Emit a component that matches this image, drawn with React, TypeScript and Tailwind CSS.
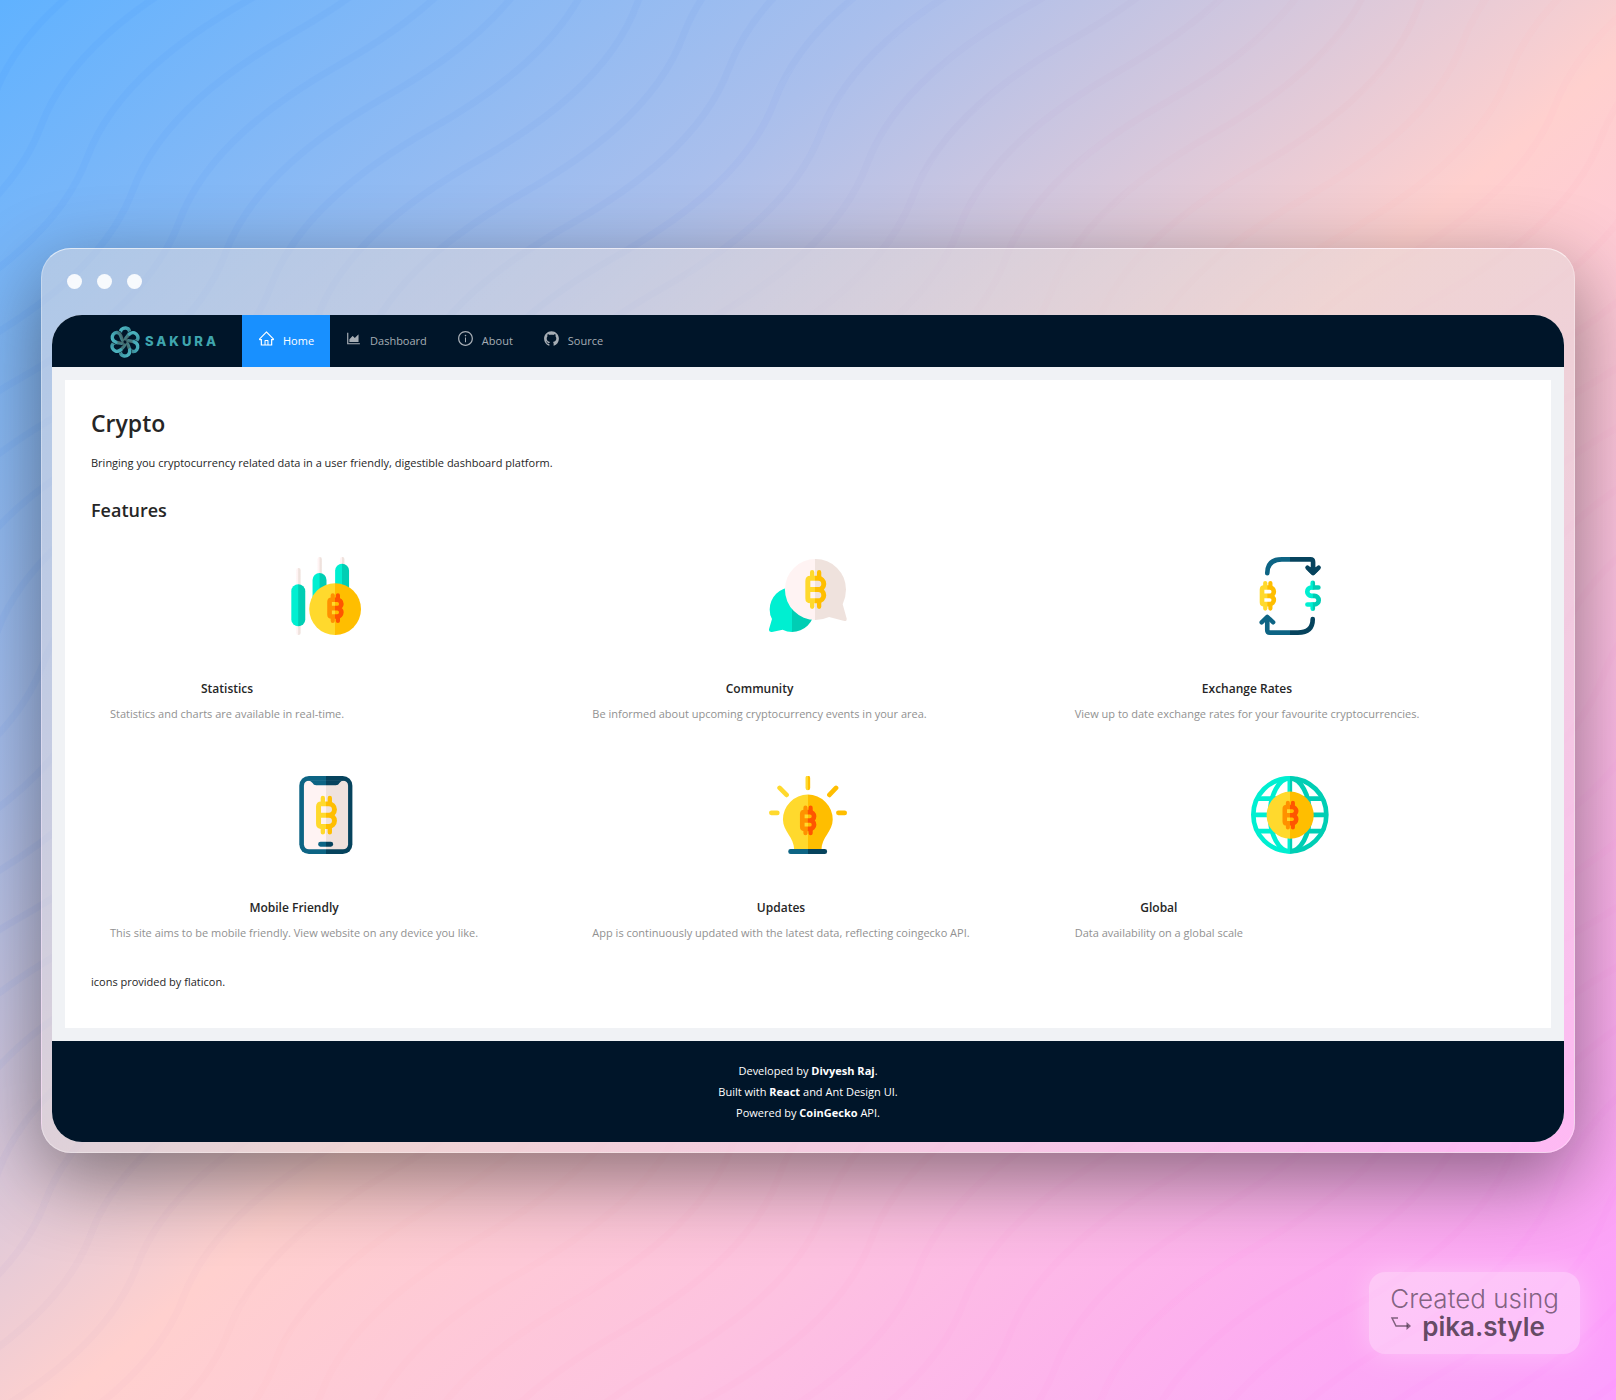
import type { ReactNode } from "react";
import {
  AiOutlineHome,
  AiOutlineAreaChart,
  AiOutlineInfoCircle,
  AiFillGithub,
} from "react-icons/ai";

/* ---------- Backdrop ---------- */

const halfWaves =
  "c-65 37 -134 87 -160 157 c-26 70 -95 120 -160 157 ";
const waveLine = "M1280 -1256 " + halfWaves.repeat(9);
const waveIndexes = Array.from({ length: 96 }, (_, i) => i - 42);

function Backdrop() {
  return (
    <svg
      className="absolute inset-0 h-full w-full"
      viewBox="0 0 1616 1400"
      preserveAspectRatio="xMidYMid slice"
      aria-hidden="true"
    >
      <defs>
        <linearGradient id="wave" gradientUnits="userSpaceOnUse" x1="0" y1="0" x2="1616" y2="1400">
          <stop offset="0" stopColor="#2f86ff" />
          <stop offset="0.3" stopColor="#6f92ea" />
          <stop offset="0.52" stopColor="#ffa0a8" stopOpacity="0.6" />
          <stop offset="1" stopColor="#ff6cff" stopOpacity="0.7" />
        </linearGradient>
        <mask id="waveMask">
          <g fill="none" stroke="#fff" strokeWidth="7">
            {waveIndexes.map((k) => (
              <path key={k} d={waveLine} transform={`translate(${385 + k * 46} ${97 + k * 32})`} />
            ))}
          </g>
        </mask>
      </defs>
      <rect width="1616" height="1400" fill="url(#wave)" opacity="0.08" mask="url(#waveMask)" />
    </svg>
  );
}

/* ---------- Logo ---------- */

function KnotLogo() {
  return (
    <svg className="h-8 w-8" viewBox="0 0 32 32" fill="none" aria-hidden="true">
      <defs>
        <linearGradient id="petal" x1="0" y1="0" x2="1" y2="1">
          <stop offset="0" stopColor="#4fb9c4" />
          <stop offset="0.5" stopColor="#3d9aa8" />
          <stop offset="1" stopColor="#4b5550" />
        </linearGradient>
      </defs>
      {[0, 60, 120, 180, 240, 300].map((a) => (
        <g key={a} transform={`rotate(${a} 16 16)`}>
          <path
            d="M11.4 8.2 C10.6 3.6 14 1.8 16.8 2 C20.6 2.4 21.6 6.2 19.6 8.8 C18.4 10.4 17 11.4 16.4 13"
            stroke="#001529"
            strokeWidth="4.4"
          />
          <path
            d="M11.4 8.2 C10.6 3.6 14 1.8 16.8 2 C20.6 2.4 21.6 6.2 19.6 8.8 C18.4 10.4 17 11.4 16.4 13"
            stroke="url(#petal)"
            strokeWidth="3.4"
            strokeLinecap="round"
          />
        </g>
      ))}
    </svg>
  );
}

/* ---------- Two-tone feature icons ---------- */

function Split({ id, x, a, b }: { id: string; x: number; a: string; b: string }) {
  return (
    <linearGradient id={id} gradientUnits="userSpaceOnUse" x1={x - 1} x2={x + 1} y1="0" y2="0">
      <stop offset="0" stopColor={a} />
      <stop offset="1" stopColor={b} />
    </linearGradient>
  );
}

function Coin({
  id,
  x,
  y,
  scale = 1,
  weight = 15,
  a,
  b,
}: {
  id: string;
  x: number;
  y: number;
  scale?: number;
  weight?: number;
  a: string;
  b: string;
}) {
  return (
    <g transform={`translate(${x} ${y}) scale(${scale})`}>
      <defs>
        <Split id={id} x={-2} a={a} b={b} />
      </defs>
      <g fill="none" stroke={`url(#${id})`} strokeWidth={weight} strokeLinecap="round" strokeLinejoin="round">
        <path d="M-16 -34 H7 a17 17 0 0 1 0 34 H-20 M7 0 a17 17 0 0 1 0 34 H-16 Q-24 34 -24 26 V-26 Q-24 -34 -16 -34" />
        <path d="M-11 -52 V-40 M10 -52 V-40 M-11 40 V52 M10 40 V52" strokeWidth={weight - 2} />
      </g>
    </g>
  );
}

const GREEN = { a: "#00efd1", b: "#00ceb4" };
const YELLOW = { a: "#ffd92d", b: "#ffbe00" };
const ORANGE = { a: "#ff9100", b: "#ff5500" };
const NAVY = { a: "#0d6484", b: "#06435d" };
const CREAM = { a: "#fff3f3", b: "#efe2dd" };

function StatisticsIcon() {
  return (
    <svg className="size-[78px]" viewBox="50 47 235 235" aria-hidden="true">
      <defs>
        <Split id="s1" x={84} {...GREEN} />
        <Split id="s2" x={148} {...GREEN} />
        <Split id="s3" x={216} {...GREEN} />
        <Split id="s4" x={84} {...CREAM} />
        <Split id="s5" x={148} {...CREAM} />
        <Split id="s6" x={216} {...CREAM} />
        <Split id="s7" x={195} {...YELLOW} />
      </defs>
      <rect x="78" y="80" width="13" height="202" rx="6" fill="url(#s4)" />
      <rect x="142" y="47" width="13" height="80" rx="6" fill="url(#s5)" />
      <rect x="210" y="47" width="13" height="60" rx="6" fill="url(#s6)" />
      <rect x="63" y="129" width="42" height="127" rx="21" fill="url(#s1)" />
      <rect x="127" y="95" width="42" height="110" rx="21" fill="url(#s2)" />
      <rect x="195" y="67" width="42" height="110" rx="21" fill="url(#s3)" />
      <circle cx="195" cy="204" r="78" fill="url(#s7)" />
      <Coin id="s8" x={196} y={201} scale={0.74} weight={19} {...ORANGE} />
    </svg>
  );
}

function CommunityIcon() {
  return (
    <svg className="size-[78px]" viewBox="57 47 235 235" aria-hidden="true">
      <defs>
        <Split id="c1" x={126} {...GREEN} />
        <Split id="c2" x={196} {...CREAM} />
      </defs>
      <path
        d="M126 138 a67 67 0 1 1 0 135 Q112 273 98 266 L66 273 Q56 274 57 265 L66 234 Q59 222 59 205 a67 67 0 0 1 67 -67Z"
        fill="url(#c1)"
      />
      <path
        d="M197 53 a92 92 0 0 1 92 92 Q289 168 279 189 L291 232 Q292 241 284 240 L238 228 Q218 237 197 237 a92 92 0 0 1 0 -184Z"
        fill="url(#c2)"
      />
      <Coin id="c3" x={198} y={145} {...YELLOW} />
    </svg>
  );
}

function ExchangeIcon() {
  return (
    <svg className="size-[78px]" viewBox="48 47 235 235" aria-hidden="true">
      <defs>
        <Split id="e1" x={165} {...NAVY} />
        <Split id="e2" x={234} {...GREEN} />
      </defs>
      <g fill="none" stroke="url(#e1)" strokeWidth="14" strokeLinecap="round" strokeLinejoin="round">
        <path d="M97 96 Q97 54 141 54 H227 Q235 54 235 62 V92" />
        <path d="M218 79 L235 96 L252 79" strokeWidth="13" />
        <path d="M225 84 L235 94 L245 84" />
        <path d="M234 234 Q234 275 189 275 H105 Q97 275 97 267 V234" />
        <path d="M80 244 L97 227 L115 244" strokeWidth="13" />
      </g>
      <Coin id="e3" x={99} y={164} scale={0.74} weight={19} {...YELLOW} />
      <g fill="none" stroke="url(#e2)" strokeWidth="14" strokeLinecap="round" strokeLinejoin="round">
        <path d="M251 139 H230 a12 12 0 0 0 0 25 H239 a12 12 0 0 1 0 26 H218" />
        <path d="M234 125 L234.1 139 M234 190 L234.1 203" />
      </g>
    </svg>
  );
}

function MobileIcon() {
  return (
    <svg className="size-[78px]" viewBox="51 45 235 235" aria-hidden="true">
      <defs>
        <Split id="m1" x={168} {...NAVY} />
        <Split id="m2" x={168} {...CREAM} />
      </defs>
      <rect x="88" y="45" width="160" height="235" rx="29" fill="url(#m1)" />
      <rect x="102" y="59" width="133" height="207" rx="15" fill="url(#m2)" />
      <path d="M112 58 H224 Q212 60 209 66 Q206 73 198 73 H139 Q131 73 128 66 Q124 60 112 58Z" fill="url(#m1)" />
      <rect x="145" y="243" width="45" height="15" rx="7" fill="url(#m1)" />
      <Coin id="m3" x={170} y={163} {...YELLOW} />
    </svg>
  );
}

function UpdatesIcon() {
  return (
    <svg className="size-[78px]" viewBox="57 45 235 235" aria-hidden="true">
      <defs>
        <Split id="u1" x={174} {...YELLOW} />
        <Split id="u2" x={174} {...NAVY} />
      </defs>
      <path
        d="M174 51 L174.1 81 M89 81 L110 102 M259 81 L239 102 M64 156 L82 156.1 M266 156 L285 156.1"
        stroke="url(#u1)"
        strokeWidth="14"
        strokeLinecap="round"
      />
      <path d="M99 176 a75 75 0 0 1 150 0 c0 36 -34 53 -34 92 H133 c0 -39 -34 -56 -34 -92Z" fill="url(#u1)" />
      <rect x="115" y="265" width="117" height="15" rx="7" fill="url(#u2)" />
      <Coin id="u3" x={175} y={179} scale={0.74} weight={19} {...ORANGE} />
    </svg>
  );
}

function GlobalIcon() {
  return (
    <svg className="size-[78px]" viewBox="48 45 235 235" aria-hidden="true">
      <defs>
        <Split id="g1" x={165} {...GREEN} />
        <Split id="g2" x={166} {...YELLOW} />
      </defs>
      <g fill="none" stroke="url(#g1)" strokeWidth="14">
        <circle cx="165" cy="162" r="110" />
        <ellipse cx="165" cy="162" rx="60" ry="110" />
        <path d="M165 52 L165.1 272 M64 113 L267 113.1 M55 162 L275 162.1 M64 211 L267 211.1" />
      </g>
      <circle cx="166" cy="163" r="71" fill="url(#g2)" />
      <Coin id="g3" x={167} y={163} scale={0.72} weight={19} {...ORANGE} />
    </svg>
  );
}

/* ---------- Content ---------- */

const features: { title: string; text: string; icon: ReactNode }[] = [
  { title: "Statistics", text: "Statistics and charts are available in real-time.", icon: <StatisticsIcon /> },
  { title: "Community", text: "Be informed about upcoming cryptocurrency events in your area.", icon: <CommunityIcon /> },
  { title: "Exchange Rates", text: "View up to date exchange rates for your favourite cryptocurrencies.", icon: <ExchangeIcon /> },
  { title: "Mobile Friendly", text: "This site aims to be mobile friendly. View website on any device you like.", icon: <MobileIcon /> },
  { title: "Updates", text: "App is continuously updated with the latest data, reflecting coingecko API.", icon: <UpdatesIcon /> },
  { title: "Global", text: "Data availability on a global scale", icon: <GlobalIcon /> },
];

const navItems = [
  { label: "Home", icon: AiOutlineHome, active: true },
  { label: "Dashboard", icon: AiOutlineAreaChart, active: false },
  { label: "About", icon: AiOutlineInfoCircle, active: false },
  { label: "Source", icon: AiFillGithub, active: false },
];

function Header() {
  return (
    <header className="flex h-[52px] items-stretch bg-[#001529] pl-[57px]">
      <a href="#home" className="mr-[23px] flex items-center gap-1 pt-0.5">
        <KnotLogo />
        <span className="font-['Inter',sans-serif] text-[13px] font-extrabold tracking-[3px] text-[#3fa5ae]">
          SAKURA
        </span>
      </a>
      <nav className="flex">
        {navItems.map(({ label, icon: Icon, active }) => (
          <a
            key={label}
            href={`#${label.toLowerCase()}`}
            className={
              active
                ? "flex items-center gap-2 bg-[#1890ff] px-4 text-white"
                : "flex items-center gap-2 px-[15px] text-[#a6adb4]"
            }
          >
            <Icon className="mb-1 size-[17px]" aria-hidden="true" />
            {label}
          </a>
        ))}
      </nav>
    </header>
  );
}

function PikaBadge() {
  return (
    <a
      href="#pika"
      className="absolute right-9 bottom-[46px] rounded-2xl bg-white/35 px-[21px] py-[13px] font-['Inter',sans-serif] text-[26px] leading-7 text-[#3c2a3c]/65 shadow-[0_0_30px_rgba(255,255,255,0.35)]"
    >
      <span className="block font-light">Created using</span>
      <span className="flex items-center gap-2.5">
        <svg className="h-5 w-[22px]" viewBox="0 0 22 20" fill="none" stroke="currentColor" strokeWidth="1.5" aria-hidden="true">
          <path d="M8 1 H2 L6 9 H18" />
          <path d="M16.500 5 L21 9 L16.500 13Z" fill="currentColor" stroke="none" />
        </svg>
        <span className="font-semibold text-[#3c2a3c]/80">pika.style</span>
      </span>
    </a>
  );
}

export default function App() {
  return (
    <div className="relative flex min-h-screen flex-col justify-center bg-[linear-gradient(to_bottom_right,#60b2ff_0%,#aabfec_28%,#ffd0ce_52%,#fdc2e0_70%,#fc9cfd_100%)] px-[41px] py-10 font-['Open_Sans','Noto_Sans',sans-serif] text-[11px] leading-[21px] text-[#262626]">
      <Backdrop />
      <div className="relative rounded-[30px] border border-white/30 border-t-white/60 bg-[linear-gradient(to_bottom_right,#dfd8d880_0%,#dfd8d880_60%,#ffc8f480_100%)] p-2.5 pt-0 shadow-[0_25px_80px_rgba(0,0,0,0.45)]">
        <div className="flex h-[66px] items-center gap-[15px] pl-[15px]" aria-hidden="true">
          <span className="size-[15px] rounded-full bg-white/90" />
          <span className="size-[15px] rounded-full bg-white/90" />
          <span className="size-[15px] rounded-full bg-white/90" />
        </div>

        <div className="overflow-hidden rounded-[30px] bg-[#f0f2f5]">
          <Header />

          <main className="p-[13px]">
            <div className="bg-white px-[26px] pt-[25px] pb-9">
              <h1 className="mb-[11px] text-[23px] leading-9 font-semibold">Crypto</h1>
              <p>Bringing you cryptocurrency related data in a user friendly, digestible dashboard platform.</p>
              <h2 className="mt-[23px] mb-[15px] text-[18px] leading-7 font-semibold">Features</h2>

              <div className="grid grid-cols-3 gap-x-[13px] gap-y-4">
                {features.map((f) => (
                  <section key={f.title} className="px-[19px] py-[18px]">
                    <div className="mb-[43px] flex justify-center">{f.icon}</div>
                    <div className="w-fit text-center">
                      <h3 className="mb-1 text-[12px] leading-[21px] font-semibold">{f.title}</h3>
                      <p className="whitespace-nowrap text-[#919191]">{f.text}</p>
                    </div>
                  </section>
                ))}
              </div>

              <p className="mt-2.5">icons provided by flaticon.</p>
            </div>
          </main>

          <footer className="bg-[#001529] py-[19px] text-center text-white">
            <p>
              Developed by <strong>Divyesh Raj</strong>.
            </p>
            <p>
              Built with <strong>React</strong> and Ant Design UI.
            </p>
            <p>
              Powered by <strong>CoinGecko</strong> API.
            </p>
          </footer>
        </div>
      </div>
      <PikaBadge />
    </div>
  );
}
